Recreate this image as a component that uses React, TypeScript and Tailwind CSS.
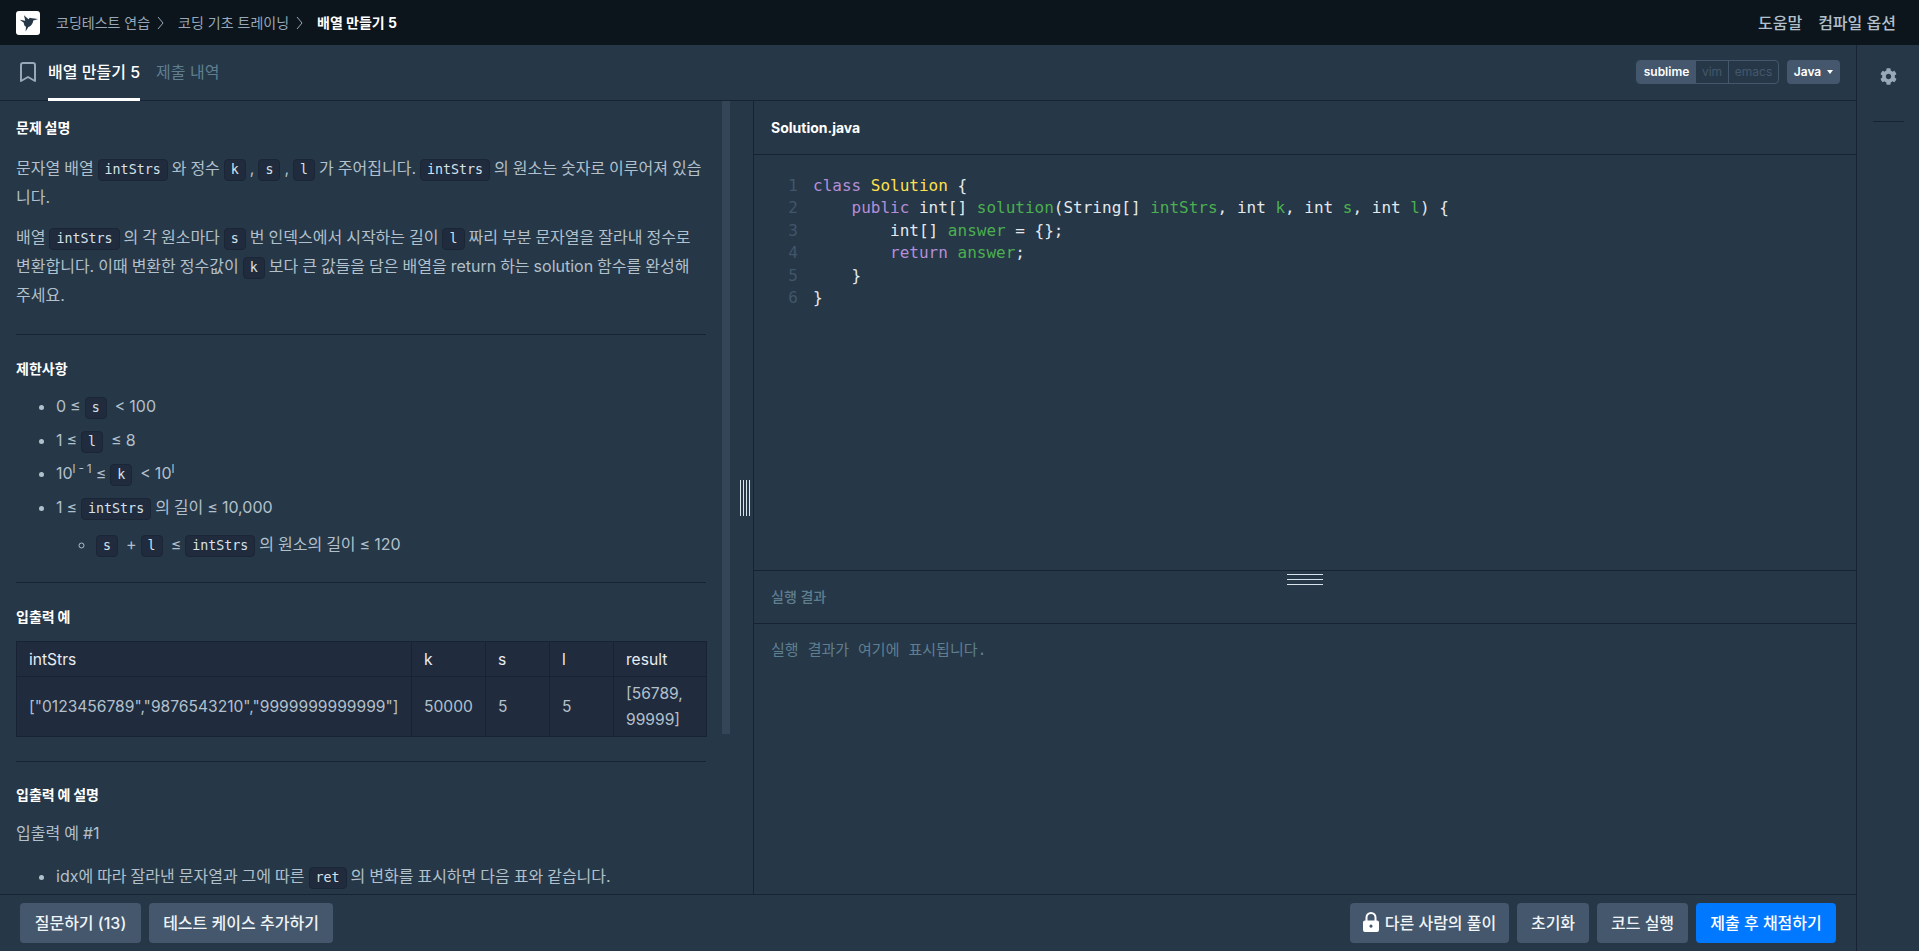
import { FaCog } from 'react-icons/fa';
import { Bookmark } from 'lucide-react';

const Code = ({ children }: { children: string }) => (
  <code className="inline-block align-baseline h-[22px] leading-[20px] px-[6px] rounded-[4px] bg-[#202b3d] border border-[#1a2535] text-[#d7e2eb] text-[13.3px] font-['DejaVu_Sans_Mono',monospace]">
    {children}
  </code>
);

const Title = ({ children }: { children: string }) => (
  <h5 className="text-[14px] leading-[20px] font-bold text-white">{children}</h5>
);

const Logo = () => (
  <div className="w-6 h-6 rounded-[3px] bg-white flex items-center justify-center">
    <svg width="22" height="22" viewBox="0 0 24 24">
      <path
        fill="#263747"
        d="M3 8.5 L9 9.6 L7.6 3.6 L12.5 8 L14 6.2 L16.4 6.8 L23 7.6 L17.8 9.2 C17.4 12.8 15 15.6 12.4 16.4 L9.4 21.4 L9.8 16.2 C7.6 15.2 7.6 12.6 7.4 11.6 Z"
      />
    </svg>
  </div>
);

const Crumb = ({ children }: { children: string }) => (
  <div className="flex items-center text-[14px] text-[#98a8b9]">
    <span>{children}</span>
    <svg width="7" height="14" viewBox="0 0 7 14" className="ml-[7px] mr-[14px]" fill="none" stroke="#98a8b9">
      <path d="M1 1 L6 7 L1 13" />
    </svg>
  </div>
);

const DarkButton = ({ children, cls }: { children: React.ReactNode; cls: string }) => (
  <button className={`h-10 rounded-[4px] bg-[#44576c] text-[#f0f4f7] text-[16px] font-medium flex items-center justify-center ${cls}`}>
    {children}
  </button>
);

const Hr = () => <div className="h-px bg-[#172334]" />;

const code: React.ReactNode[] = [
  <>
    <span className="text-[#b48ed8]">class</span> <span className="text-[#ffe04d]">Solution</span> {'{'}
  </>,
  <>
    {'    '}
    <span className="text-[#b48ed8]">public</span> int[] <span className="text-[#4caf50]">solution</span>(String[]{' '}
    <span className="text-[#4caf50]">intStrs</span>, int <span className="text-[#4caf50]">k</span>, int{' '}
    <span className="text-[#4caf50]">s</span>, int <span className="text-[#4caf50]">l</span>) {'{'}
  </>,
  <>
    {'        '}int[] <span className="text-[#4caf50]">answer</span> = {'{}'};
  </>,
  <>
    {'        '}
    <span className="text-[#b48ed8]">return</span> <span className="text-[#4caf50]">answer</span>;
  </>,
  <>{'    }'}</>,
  <>{'}'}</>,
];

const Td = ({ children, cls = '' }: { children: React.ReactNode; cls?: string }) => (
  <td className={`border border-[#172334] px-3 ${cls}`}>{children}</td>
);

export default function App() {
  return (
    <div className="h-[951px] w-full flex flex-col overflow-hidden bg-[#263747] text-[#b2c0cc] font-['Inter','Noto_Sans_CJK_KR',sans-serif]">
      {/* header */}
      <header className="h-[45px] shrink-0 bg-[#0c151c] flex items-center pl-4 pr-[23px]">
        <Logo />
        <div className="flex items-center ml-[16px]">
          <Crumb>코딩테스트 연습</Crumb>
          <Crumb>코딩 기초 트레이닝</Crumb>
          <span className="text-[14px] font-bold text-white">배열 만들기 5</span>
        </div>
        <div className="ml-auto flex items-center gap-4 text-[16px] font-medium text-[#b2c0cc]">
          <span>도움말</span>
          <span>컴파일 옵션</span>
        </div>
      </header>

      <div className="flex-1 flex min-h-0">
        <div className="w-[1857px] shrink-0 flex flex-col border-r border-[#172334]">
          {/* tabs */}
          <div className="h-[56px] shrink-0 flex items-stretch border-b border-[#172334]">
            <div className="w-12 flex items-center justify-center">
              <Bookmark size={24} strokeWidth={2} className="text-[#98a8b9] ml-[8px] -mt-[1px]" />
            </div>
            <div className="relative flex items-center text-[16px] font-medium text-white -mt-[2px]">
              배열 만들기 5
              <div className="absolute left-0 right-0 -bottom-[1px] h-[3px] bg-white" />
            </div>
            <div className="flex items-center ml-4 text-[16px] text-[#5f7f90] -mt-[2px]">제출 내역</div>
            <div className="ml-auto flex items-center pr-4 -mt-[2px]">
              <div className="flex h-6 rounded-[4px] border border-[#44576c] text-[12px] text-[#44576c] overflow-hidden">
                <span className="w-[59px] bg-[#44576c] text-white font-semibold flex items-center justify-center">sublime</span>
                <span className="w-[33px] flex items-center justify-center border-r border-[#44576c]">vim</span>
                <span className="flex-1 w-[49px] flex items-center justify-center">emacs</span>
              </div>
              <div className="ml-2 w-[53px] h-6 rounded-[4px] bg-[#44576c] text-white text-[12px] font-semibold flex items-center justify-center gap-[6px]">
                Java
                <span className="w-0 h-0 border-x-[3px] border-x-transparent border-t-[4px] border-t-white" />
              </div>
            </div>
          </div>

          <div className="flex-1 flex min-h-0">
            {/* problem */}
            <div className="w-[754px] shrink-0 flex border-r border-[#172334]">
              <div className="w-[722px] shrink-0 overflow-hidden px-4 pt-[17px] text-[16px] leading-[29px] [word-spacing:-0.5px]">
                <Title>문제 설명</Title>
                <p className="mt-[16px]">
                  문자열 배열 <Code>intStrs</Code> 와 정수 <Code>k</Code> , <Code>s</Code> , <Code>l</Code> 가 주어집니다. <Code>intStrs</Code> 의 원소는 숫자로 이루어져 있습니다.
                </p>
                <p className="mt-[11px]">
                  배열 <Code>intStrs</Code> 의 각 원소마다 <Code>s</Code> 번 인덱스에서 시작하는 길이 <Code>l</Code> 짜리 부분 문자열을 잘라내 정수로 변환합니다. 이때 변환한 정수값이 <Code>k</Code> 보다 큰 값들을 담은 배열을 return 하는 solution 함수를 완성해 주세요.
                </p>
                <div className="mt-[24px]"><Hr /></div>
                <div className="mt-[24px]"><Title>제한사항</Title></div>
                <ul className="mt-[11px] pl-10 list-disc leading-[33.5px] marker:text-[#b2c0cc]">
                  <li>0 ≤ <Code>s</Code>&nbsp; &lt; 100</li>
                  <li>1 ≤ <Code>l</Code>&nbsp; ≤ 8</li>
                  <li>10<sup className="text-[12px]">l - 1</sup> ≤ <Code>k</Code>&nbsp; &lt; 10<sup className="text-[12px]">l</sup></li>
                  <li>
                    1 ≤ <Code>intStrs</Code> 의 길이 ≤ 10,000
                    <ul className="pl-10 mt-[3px] list-[circle] leading-[34px]">
                      <li><Code>s</Code>&nbsp; + <Code>l</Code>&nbsp; ≤ <Code>intStrs</Code> 의 원소의 길이 ≤ 120</li>
                    </ul>
                  </li>
                </ul>
                <div className="mt-[21px]"><Hr /></div>
                <div className="mt-[24px]"><Title>입출력 예</Title></div>
                <table className="mt-[14px] w-[690px] table-fixed border-collapse bg-[#202b3d] text-[15.6px] leading-[29px]">
                  <colgroup>
                    <col className="w-[395px]" />
                    <col className="w-[74px]" />
                    <col className="w-[64px]" />
                    <col className="w-[64px]" />
                    <col className="w-[93px]" />
                  </colgroup>
                  <tbody>
                    <tr className="h-[35px] text-[#e9ecf3]">
                      <Td>intStrs</Td>
                      <Td>k</Td>
                      <Td>s</Td>
                      <Td>l</Td>
                      <Td>result</Td>
                    </tr>
                    <tr className="h-[60px] text-[#b2c0cc]">
                      <Td cls="whitespace-nowrap">["0123456789","9876543210","9999999999999"]</Td>
                      <Td>50000</Td>
                      <Td>5</Td>
                      <Td>5</Td>
                      <Td cls="leading-[26px]">[56789, 99999]</Td>
                    </tr>
                  </tbody>
                </table>
                <div className="mt-[24px]"><Hr /></div>
                <div className="mt-[23px]"><Title>입출력 예 설명</Title></div>
                <p className="mt-[14px]">입출력 예 #1</p>
                <ul className="mt-[14px] pl-10 list-disc">
                  <li>idx에 따라 잘라낸 문자열과 그에 따른 <Code>ret</Code> 의 변화를 표시하면 다음 표와 같습니다.</li>
                </ul>
              </div>
              <div className="w-2 shrink-0">
                <div className="h-[633px] bg-[#344558]" />
              </div>
              <div className="flex-1 flex items-center justify-center pl-[7px]">
                <div className="w-[10px] h-9 flex justify-between">
                  <span className="w-px bg-[#d7e2eb]" />
                  <span className="w-px bg-[#d7e2eb]" />
                  <span className="w-px bg-[#d7e2eb]" />
                  <span className="w-px bg-[#d7e2eb]" />
                </div>
              </div>
            </div>

            {/* editor */}
            <div className="flex-1 min-w-0 flex flex-col">
              <div className="h-[54px] shrink-0 flex items-center px-[17px] border-b border-[#172334] text-[14px] font-bold text-white">
                Solution.java
              </div>
              <div className="h-[416px] shrink-0 border-b border-[#172334] pt-[20px] font-['DejaVu_Sans_Mono',monospace] text-[16px] leading-[22.4px]">
                {code.map((line, i) => (
                  <div key={i} className="flex whitespace-pre text-[#e4e9ed]">
                    <span className="w-[59px] shrink-0 pr-[15px] text-right text-[#41566a]">{i + 1}</span>
                    <span>{line}</span>
                  </div>
                ))}
              </div>
              <div className="relative h-[53px] shrink-0 flex items-center px-[17px] pb-[1px] border-b border-[#172334] text-[14px] font-medium text-[#5f7f90]">
                실행 결과
                <div className="absolute left-[533px] top-[3px] w-9 h-[11px] flex flex-col justify-between">
                  <span className="h-px bg-[#d7e2eb]" />
                  <span className="h-px bg-[#d7e2eb]" />
                  <span className="h-px bg-[#d7e2eb]" />
                </div>
              </div>
              <div className="flex-1 px-[17px] pt-[16px] font-['DejaVu_Sans_Mono','Noto_Sans_CJK_KR',monospace] text-[15px] leading-[20px] text-[#5f7f90]">
                실행 결과가 여기에 표시됩니다.
              </div>
            </div>
          </div>

          {/* bottom bar */}
          <div className="h-[57px] shrink-0 border-t border-[#172334] flex items-center pl-5 pr-5 pb-[1px]">
            <DarkButton cls="w-[121px]">질문하기 (13)</DarkButton>
            <DarkButton cls="w-[184px] ml-2">테스트 케이스 추가하기</DarkButton>
            <DarkButton cls="w-[159px] ml-auto gap-[6px]">
              <svg width="16" height="20" viewBox="0 0 16 20" className="-mt-[2px]">
                <path d="M3.5 9 V5.5 a4.5 4.5 0 0 1 9 0 V9" fill="none" stroke="#fff" strokeWidth="2" />
                <path
                  fill="#fff"
                  fillRule="evenodd"
                  d="M2 8.5 H14 a2 2 0 0 1 2 2 V18 a2 2 0 0 1 -2 2 H2 a2 2 0 0 1 -2 -2 V10.500 a2 2 0 0 1 2 -2 Z M8 12.600 a1.600 1.600 0 1 0 0.010 0 Z"
                />
              </svg>
              다른 사람의 풀이
            </DarkButton>
            <DarkButton cls="w-[72px] ml-2">초기화</DarkButton>
            <DarkButton cls="w-[91px] ml-2">코드 실행</DarkButton>
            <button className="w-[140px] h-10 ml-2 rounded-[4px] bg-[#0078ff] text-white text-[16px] font-medium">
              제출 후 채점하기
            </button>
          </div>
        </div>

        {/* sidebar */}
        <aside className="flex-1 flex flex-col items-center pt-[23px]">
          <FaCog size={17} className="text-[#98a8b9]" />
          <div className="mt-[36px] w-[31px] h-px bg-[#172334]" />
        </aside>
      </div>
    </div>
  );
}
